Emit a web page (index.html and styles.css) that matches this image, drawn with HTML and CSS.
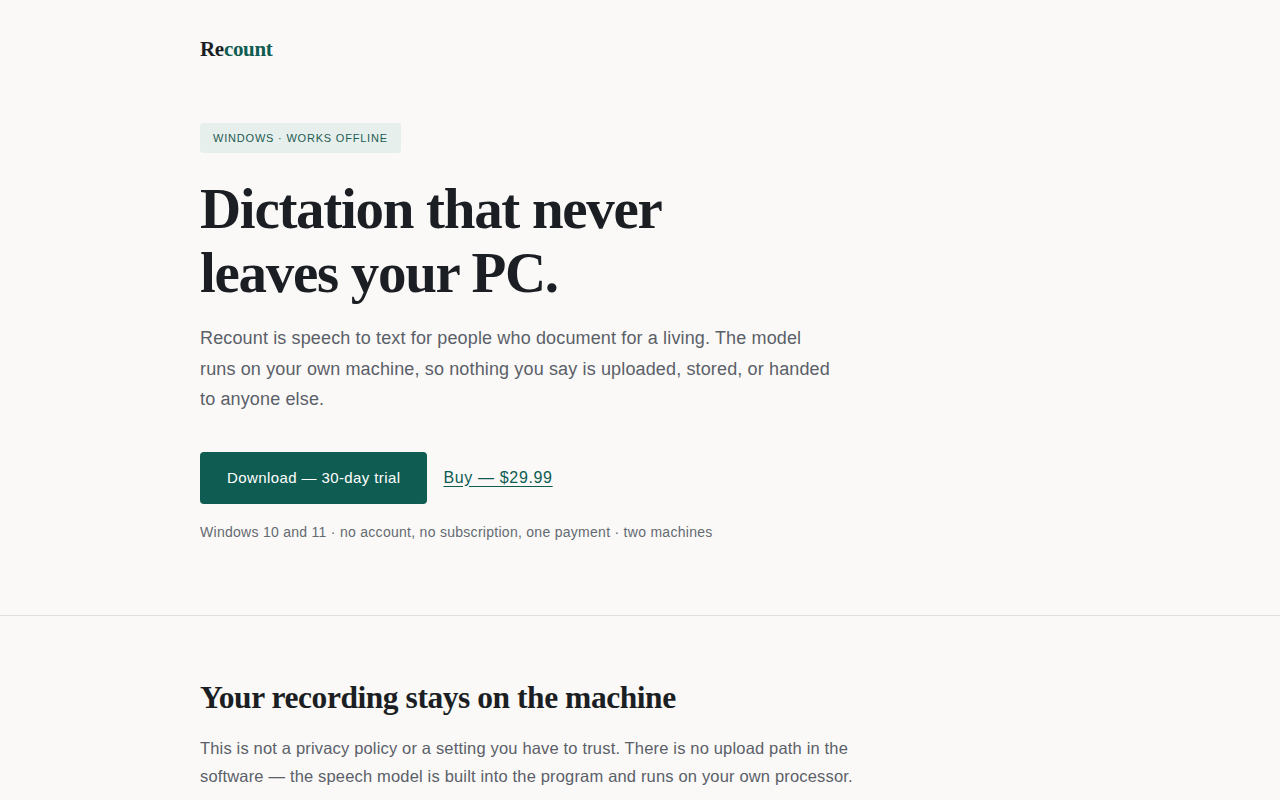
FILE: index.html
```html
<!DOCTYPE html>
<html lang="en">
<head>
<meta charset="utf-8">
<title>Recount</title>
<link rel="stylesheet" href="styles.css">
</head>
<body>
<header class="site-header">
  <div class="wrap">
    <a class="logo" href="#"><span class="logo-re">Re</span><span class="logo-count">count</span></a>
  </div>
</header>
<main>
  <section class="hero">
    <div class="wrap">
      <span class="tag">Windows · Works offline</span>
      <h1 class="hero-title">Dictation that never<br>leaves your PC.</h1>
      <p class="lead">Recount is speech to text for people who document for a living. The model runs on your own machine, so nothing you say is uploaded, stored, or handed to anyone else.</p>
      <div class="actions">
        <a class="btn" href="#">Download — 30-day trial</a>
        <a class="buy" href="#">Buy — $29.99</a>
      </div>
      <p class="fine">Windows 10 and 11 · no account, no subscription, one payment · two machines</p>
    </div>
  </section>
  <section class="feature">
    <div class="wrap">
      <h2 class="feature-title">Your recording stays on the machine</h2>
      <p class="feature-text">This is not a privacy policy or a setting you have to trust. There is no upload path in the software — the speech model is built into the program and runs on your own processor.</p>
    </div>
  </section>
</main>
</body>
</html>
```
FILE: styles.css
```css
* { box-sizing: border-box; }
html, body { margin: 0; padding: 0; }
body {
  background: #faf9f7;
  color: #1b1f24;
  font-family: "Liberation Sans", Arial, sans-serif;
}
.wrap {
  width: 880px;
  margin: 0 auto;
}
.site-header { padding-top: 37px; }
.logo {
  font-family: "Liberation Serif", "Times New Roman", serif;
  font-weight: 700;
  font-size: 21px;
  text-decoration: none;
  letter-spacing: -0.3px;
}
.logo-re { color: #1b1f24; }
.logo-count { color: #0f5c52; }

.hero { padding-top: 61px; padding-bottom: 73px; border-bottom: 1px solid #e2dfda; }
.tag {
  display: inline-block;
  background: #e7efed;
  color: #1d5c52;
  font-size: 11px;
  letter-spacing: 0.8px;
  text-transform: uppercase;
  padding: 8px 13px 8px 13px;
  border-radius: 3px;
  line-height: 14px;
}
.hero-title {
  font-family: "Liberation Serif", "Times New Roman", serif;
  font-weight: 700;
  font-size: 57px;
  line-height: 64px;
  letter-spacing: -1.3px;
  margin: 24px 0 0;
  color: #1b1f24;
}
.lead {
  font-size: 18px;
  line-height: 30.5px;
  letter-spacing: 0.14px;
  color: #5a6069;
  max-width: 640px;
  margin: 18px 0 0;
}
.actions {
  display: flex;
  align-items: center;
  gap: 16px;
  margin-top: 37px;
}
.btn {
  display: inline-block;
  background: #0f5c52;
  color: #ffffff;
  text-decoration: none;
  font-size: 15px;
  line-height: 20px;
  letter-spacing: 0.4px;
  padding: 16px 27px;
  border-radius: 4px;
}
.buy {
  color: #0f5c52;
  font-size: 16px;
  letter-spacing: 0.65px;
  text-decoration: underline;
  text-underline-offset: 3px;
}
.fine {
  margin: 18px 0 0;
  font-size: 14px;
  line-height: 20px;
  letter-spacing: 0.28px;
  color: #646a72;
}
.feature { padding-top: 62px; }
.feature-title {
  font-family: "Liberation Serif", "Times New Roman", serif;
  font-weight: 700;
  font-size: 31.5px;
  line-height: 40px;
  letter-spacing: -0.45px;
  margin: 0;
  color: #1b1f24;
}
.feature-text {
  font-size: 16.5px;
  line-height: 28px;
  letter-spacing: 0.17px;
  color: #5a6069;
  max-width: 660px;
  margin: 16px 0 0;
}
```
